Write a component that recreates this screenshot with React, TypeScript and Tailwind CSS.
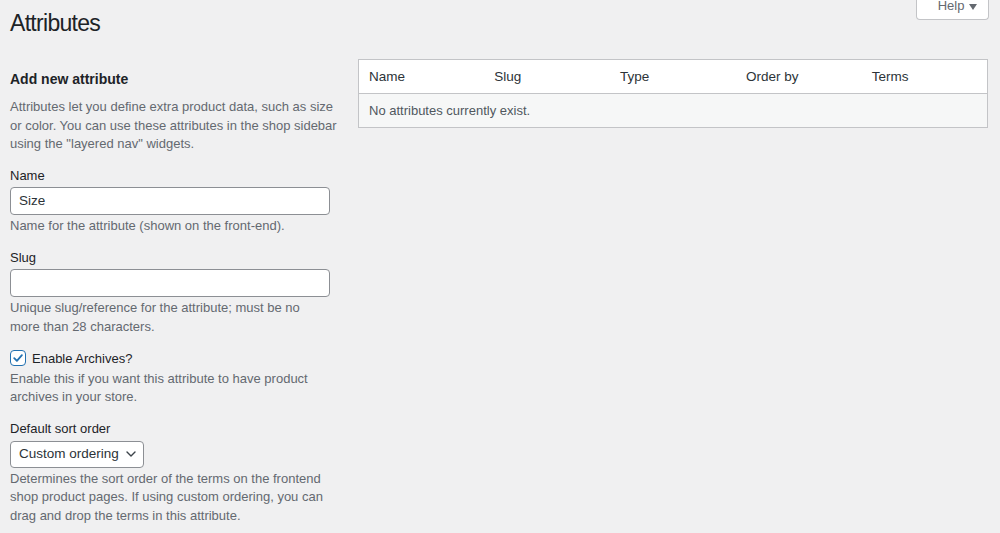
import React from "react";

const font = { fontFamily: "'Liberation Sans', Arial, sans-serif" };

function Field({ label, children, desc }: { label: string; children: React.ReactNode; desc: React.ReactNode }) {
  return (
    <div className="mt-[13.5px]">
      <label className="block text-[13px] leading-[18.5px] text-[#1d2327]">{label}</label>
      <div className="mt-[1.5px]">{children}</div>
      <p className="mt-[2px] w-[320px] text-[13px] leading-[18.5px] text-[#646970]">{desc}</p>
    </div>
  );
}

export default function App() {
  const cols = ["Name", "Slug", "Type", "Order by", "Terms"];
  return (
    <div className="min-h-[533px] w-full bg-[#f0f0f1] text-[#1d2327]" style={font}>
      <div className="flex items-start justify-between pl-[10px] pr-[11px]">
        <h1 className="pt-[8px] text-[23px] leading-[30px] font-normal tracking-[-0.7px] text-[#1d2327]">Attributes</h1>
        <button className="-mt-[8px] flex h-[28px] w-[73px] items-center justify-center gap-[5px] rounded-b-[4px] border border-t-0 border-[#c3c4c7] bg-white pt-[1px] text-[13px] leading-[22px] text-[#646970]">
          <span className="pl-[10px]">Help</span>
          <svg width="8" height="6" viewBox="0 0 8 6" className="mt-[1px]">
            <path d="M0 0 L8 0 L4 6 Z" fill="#646970" />
          </svg>
        </button>
      </div>

      <div className="flex items-start pl-[10px] pr-[12px]">
        <div className="w-[332px] shrink-0 pt-[31px] pb-[10px]">
          <h2 className="text-[14px] font-bold leading-[20px] text-[#1d2327]">Add new attribute</h2>
          <p className="mt-[9px] text-[13px] leading-[18.5px] text-[#646970]">
            Attributes let you define extra product data, such as size or color. You can use these attributes in the shop sidebar using the "layered nav" widgets.
          </p>

          <Field label="Name" desc="Name for the attribute (shown on the front-end).">
            <div className="flex h-[28px] w-[320px] items-center rounded-[4px] border border-[#8c8f94] bg-white px-[8px] text-[13.5px] text-[#2c3338]">
              Size
            </div>
          </Field>

          <Field label="Slug" desc="Unique slug/reference for the attribute; must be no more than 28 characters.">
            <div className="h-[28px] w-[320px] rounded-[4px] border border-[#8c8f94] bg-white" />
          </Field>

          <div className="mt-[13px]">
            <div className="flex h-[18.5px] items-center gap-[6px]">
              <div className="flex h-[16px] w-[16px] items-center justify-center rounded-[4px] border-[1.5px] border-[#2271b1] bg-white">
                <svg width="12" height="12" viewBox="0 0 12 12">
                  <path d="M2.2 6.2 L4.9 8.9 L9.9 3.2" fill="none" stroke="#2271b1" strokeWidth="1.8" strokeLinecap="round" strokeLinejoin="round" />
                </svg>
              </div>
              <span className="text-[13px] text-[#1d2327]">Enable Archives?</span>
            </div>
            <p className="mt-[2px] w-[320px] text-[13px] leading-[18.5px] text-[#646970]">
              Enable this if you want this attribute to have product archives in your store.
            </p>
          </div>

          <div className="mt-[13.5px]">
            <label className="block text-[13px] leading-[18.5px] text-[#1d2327]">Default sort order</label>
            <div className="mt-[2px] flex h-[27px] w-[134px] items-center justify-between rounded-[4px] border border-[#8c8f94] bg-white pl-[8px] pr-[7px] text-[13.5px] text-[#2c3338]">
              <span>Custom ordering</span>
              <svg width="10" height="6" viewBox="0 0 10 6">
                <path d="M1 1 L5 5 L9 1" fill="none" stroke="#3c434a" strokeWidth="1.4" strokeLinecap="round" strokeLinejoin="round" />
              </svg>
            </div>
            <p className="mt-[2px] w-[320px] text-[13px] leading-[18.5px] text-[#646970]">
              Determines the sort order of the terms on the frontend shop product pages. If using custom ordering, you can drag and drop the terms in this attribute.
            </p>
          </div>
        </div>

        <div className="ml-[16px] flex-1 pt-[21px]">
          <table className="w-full table-fixed border-collapse border border-[#c3c4c7] bg-white">
            <thead>
              <tr className="border-b border-[#c3c4c7]">
                {cols.map((c) => (
                  <th key={c} className="h-[34px] px-[10px] pt-[1px] text-left text-[13.5px] font-normal text-[#2c3338]">
                    {c}
                  </th>
                ))}
              </tr>
            </thead>
            <tbody>
              <tr className="bg-[#f6f7f7]">
                <td colSpan={5} className="h-[34px] px-[10px] text-[13px] text-[#50575e]">
                  No attributes currently exist.
                </td>
              </tr>
            </tbody>
          </table>
        </div>
      </div>
    </div>
  );
}
